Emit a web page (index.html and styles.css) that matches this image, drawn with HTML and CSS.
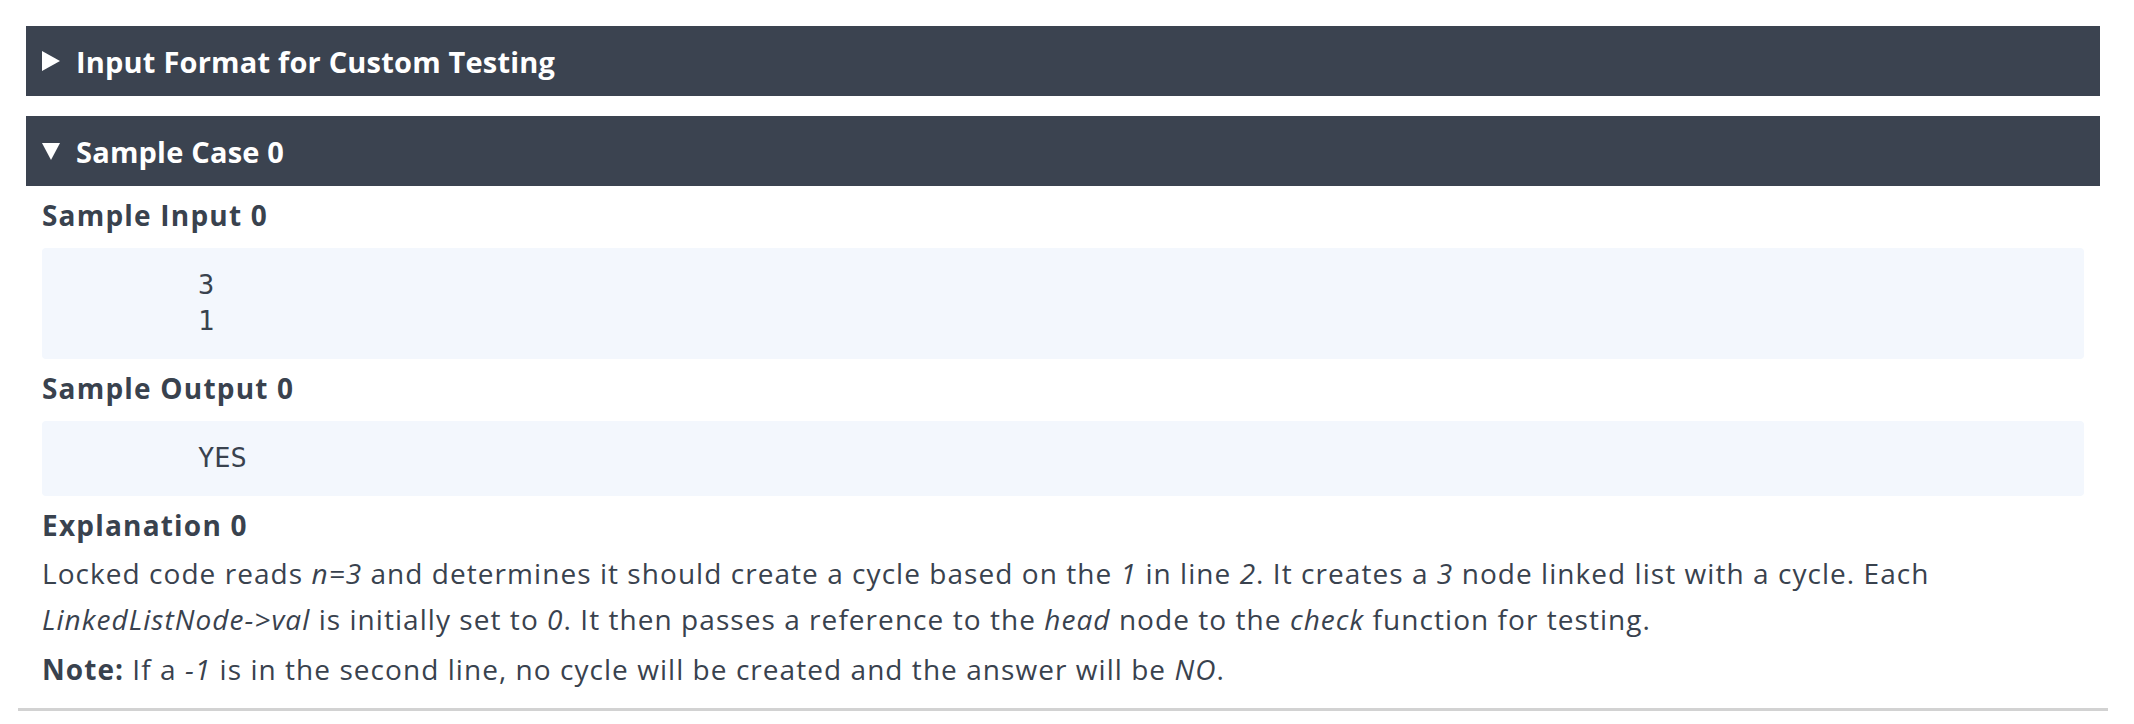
FILE: index.html
```html
<!DOCTYPE html>
<html>
<head>
<meta charset="utf-8">
<link rel="stylesheet" href="styles.css">
</head>
<body>
<div class="page">
  <div class="section">
    <div class="bar">
      <svg class="caret" width="18" height="20" viewBox="0 0 18 20"><polygon points="0,0 18,10 0,20" fill="#ffffff"/></svg>
      <span class="bar-title">Input Format for Custom Testing</span>
    </div>
  </div>
  <div class="section">
    <div class="bar">
      <svg class="caret" width="18" height="18" viewBox="0 0 18 18"><polygon points="0,1 18,1 9,18" fill="#ffffff"/></svg>
      <span class="bar-title">Sample Case 0</span>
    </div>
    <div class="case-body">
      <div class="heading">Sample Input 0</div>
      <pre class="code">3
1</pre>
      <div class="heading">Sample Output 0</div>
      <pre class="code">YES</pre>
      <div class="heading heading-tight">Explanation 0</div>
      <p class="text">Locked code reads <em>n=3</em> and determines it should create a cycle based on the <em>1</em> in line <em>2</em>. It creates a <em>3</em> node linked list with a cycle. Each <em>LinkedListNode-&gt;val</em> is initially set to <em>0</em>. It then passes a reference to the <em>head</em> node to the <em>check</em> function for testing.</p>
      <p class="text note"><strong>Note:</strong> If a <em>-1</em> is in the second line, no cycle will be created and the answer will be <em>NO</em>.</p>
    </div>
  </div>
</div>
</body>
</html>
```

FILE: styles.css
```css
html, body {
  margin: 0;
  padding: 0;
  background: #ffffff;
}
body {
  font-family: "Open Sans", Lato, sans-serif;
  color: #39424e;
}
.page {
  margin-left: 18px;
  width: 2090px;
  padding: 26px 8px 16px 8px;
  box-sizing: border-box;
  border-bottom: 3px solid #d2d2d2;
}
.section + .section {
  margin-top: 20px;
}
.bar {
  height: 70px;
  background: #3b4350;
  display: flex;
  align-items: center;
  padding-left: 16px;
  gap: 16px;
}
.caret {
  display: block;
  flex: none;
}
.bar-title {
  color: #ffffff;
  font-weight: 700;
  font-size: 29px;
  letter-spacing: 0.2px;
}
.case-body {
  padding: 0 16px 0 16px;
}
.heading {
  font-weight: 700;
  font-size: 28px;
  line-height: 34px;
  letter-spacing: 1.2px;
  padding-top: 12px;
  padding-bottom: 16px;
}
.heading-tight {
  padding-bottom: 8px;
}
.code {
  margin: 0;
  background: #f3f7fd;
  border-radius: 4px;
  padding: 19px 20px 20px 156px;
  font-family: "DejaVu Sans Mono", monospace;
  font-size: 27px;
  line-height: 36px;
  color: #39424e;
}
.text {
  margin: 0;
  font-size: 28px;
  line-height: 46px;
  letter-spacing: 1.05px;
}
.note {
  margin-top: 4px;
}
.text em {
  font-style: italic;
}
.text strong {
  font-weight: 700;
}
```
